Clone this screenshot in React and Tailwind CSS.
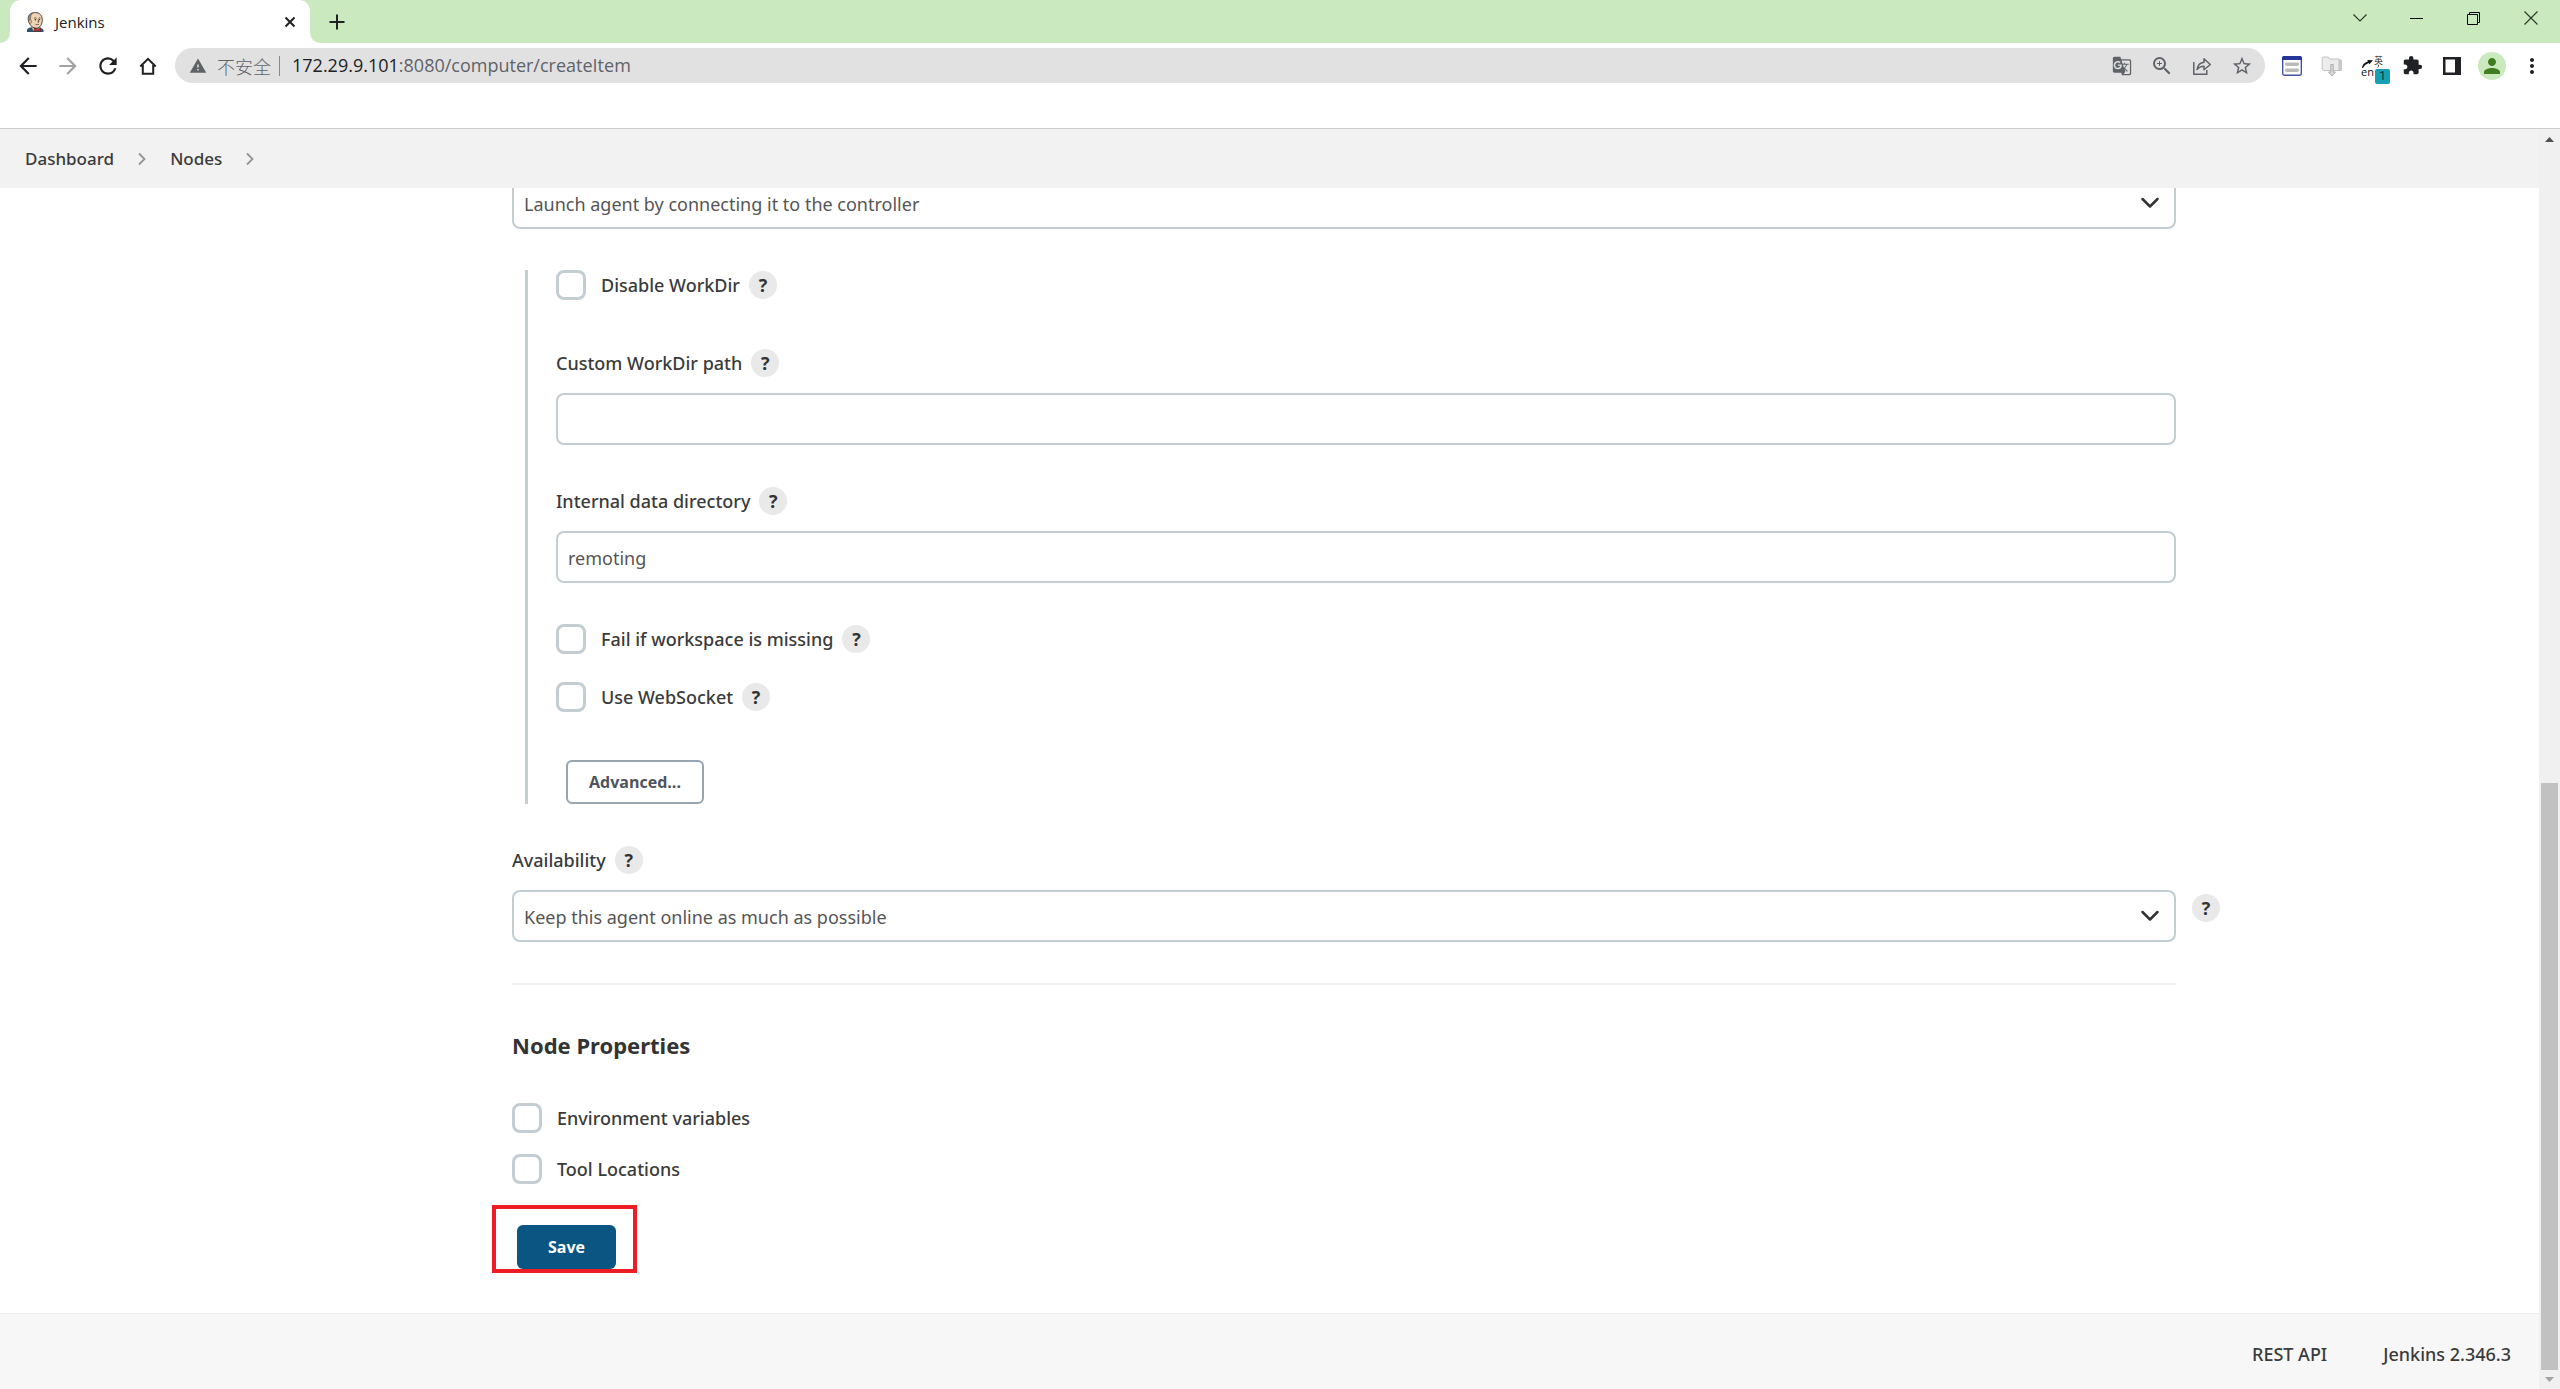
import { useState } from 'react';
import {
  MdArrowBack,
  MdArrowForward,
  MdRefresh,
  MdWarning,
  MdGTranslate,
  MdZoomIn,
  MdStarBorder,
  MdExtension,
  MdPerson,
  MdMoreVert,
} from 'react-icons/md';

function JenkinsIcon() {
  return (
    <svg width="18" height="20" viewBox="0 0 18 20" aria-hidden="true">
      <path d="M1 20v-2.600c1-1.300 3-2 5-2.100h6.500c2.300.3 4 1.400 5 2.700v2z" fill="#2f5268" />
      <path d="M6 14.500l3.500 3.500 4-3v3.500H7z" fill="#f1ece4" />
      <path d="M2.500 6.500C2.500 2.500 5.500.6 9.500.6s6.800 2.700 6.800 7.200c0 4.400-2.300 8.400-5.800 8.400-4.500 0-8-3.700-8-9.700z" fill="#efd4b3" stroke="#3a342f" strokeWidth=".9" />
      <path d="M2.200 8.500C1.500 4.500 3 1.800 6.500.9c-2 2-1.800 3.600-2 5.600.2 1.500-.4 3-.8 4.500z" fill="#8f8b86" stroke="#3a342f" strokeWidth=".5" />
      <ellipse cx="4.200" cy="9.500" rx="1.400" ry="2" fill="#e3bd98" stroke="#5a4a3d" strokeWidth=".5" />
      <path d="M8 6.300c.8-.6 1.800-.6 2.500 0M12.500 6.300c.7-.5 1.500-.5 2 0M12 7.500l1 2.500h-1.500M9.500 12.300c1.300.6 2.500.5 3.500-.2" fill="none" stroke="#3a342f" strokeWidth=".8" />
      <circle cx="9.400" cy="7.800" r=".8" fill="#2a2624" />
      <circle cx="13.400" cy="7.600" r=".7" fill="#2a2624" />
      <path d="M8 16l3 1.400 3.300-1.600v3.700L11 18.400 8 19.600z" fill="#d8352f" stroke="#5e1512" strokeWidth=".5" />
    </svg>
  );
}

function HomeIcon() {
  return (
    <svg width="20" height="20" viewBox="0 0 20 20" fill="none" stroke="#202124" strokeWidth="2" aria-hidden="true">
      <path d="M2.300 10.500L10 2.800l7.700 7.700M4.800 9v8.800h10.400V9" strokeLinejoin="miter" />
    </svg>
  );
}

function ShareIcon() {
  return (
    <svg width="20" height="20" viewBox="0 0 20 20" fill="none" stroke="#5f6368" strokeWidth="1.500" aria-hidden="true">
      <path d="M1.800 6v12.200h13V14" />
      <path d="M5 13.500c.6-4 3-6.700 7-7.200V2.800l6.300 5.700-6.300 5.300v-3.600c-3 0-5.200 1-7 3.300z" strokeLinejoin="round" />
    </svg>
  );
}

function NotesIcon() {
  return (
    <svg width="22" height="22" viewBox="0 0 22 22" aria-hidden="true">
      <rect x="1.700" y="1.700" width="18.600" height="18.600" rx="2" fill="#fff" stroke="#4450b0" strokeWidth="1.400" />
      <path d="M1 5V3a2 2 0 012-2h16a2 2 0 012 2v2z" fill="#28359a" />
      <rect x="4" y="7.500" width="14" height="3.500" rx="1.700" fill="#b9b9b9" />
      <rect x="4" y="13.500" width="14" height="3.500" rx="1.700" fill="#b9b9b9" />
    </svg>
  );
}

function FolderIcon() {
  return (
    <svg width="22" height="22" viewBox="0 0 22 22" aria-hidden="true">
      <path d="M3.500 5h16.800v10.500H3.500z" fill="#cfcfcf" stroke="#bdbdbd" />
      <path d="M1.200 3.200l1-1.200h5l1.300 2H18v11.500H2.500L1.200 14z" fill="#ececec" stroke="#c2c2c2" />
      <path d="M9.800 9.500h2.400v7.500h2.300L11 21l-3.500-4h2.300z" fill="#d9d9d9" stroke="#a9a9a9" strokeWidth=".9" />
    </svg>
  );
}

function PanelIcon() {
  return (
    <svg width="18" height="18" viewBox="0 0 18 18" aria-hidden="true">
      <path d="M0 0h18v18H0zM2.500 2.500v13H12v-13z" fill="#202124" fillRule="evenodd" />
    </svg>
  );
}

function Crumb() {
  return (
    <svg width="10" height="14" viewBox="0 0 10 14" fill="none" stroke="#949494" strokeWidth="1.800" aria-hidden="true">
      <path d="M2 1.500L7.500 7 2 12.500" />
    </svg>
  );
}

function ToolButton({ label, children }) {
  return (
    <button type="button" aria-label={label} className="flex h-7 w-7 shrink-0 items-center justify-center">
      {children}
    </button>
  );
}

function BrowserTabs() {
  return (
    <div className="flex h-[43px] items-stretch bg-[#cae9be] pl-[10px]">
      <div className="relative flex w-[300px] items-center rounded-t-[11px] bg-white pl-4 pr-[10px]">
        <JenkinsIcon />
        <span className="ml-[11px] flex-1 font-['Open_Sans',sans-serif] text-[15px] leading-5 text-[#202124]">Jenkins</span>
        <button type="button" aria-label="Close tab" className="flex h-5 w-5 items-center justify-center">
          <svg width="12" height="12" viewBox="0 0 12 12" stroke="#202124" strokeWidth="2" aria-hidden="true">
            <path d="M1.500 1.500l9 9M10.500 1.500l-9 9" />
          </svg>
        </button>
        {/* curved feet of the active tab */}
        <svg className="absolute bottom-0 right-full" width="10" height="10" viewBox="0 0 10 10" aria-hidden="true">
          <path d="M10 0v10H0A10 10 0 0010 0z" fill="#fff" />
        </svg>
        <svg className="absolute bottom-0 left-full" width="10" height="10" viewBox="0 0 10 10" aria-hidden="true">
          <path d="M0 0v10h10A10 10 0 010 0z" fill="#fff" />
        </svg>
      </div>
      <button type="button" aria-label="New tab" className="ml-[17px] flex w-5 items-center justify-center">
        <svg width="16" height="16" viewBox="0 0 16 16" stroke="#202124" strokeWidth="2" aria-hidden="true">
          <path d="M8 .5v15M.5 8h15" />
        </svg>
      </button>
      <div className="mr-px ml-auto flex h-9 text-black">
        <button type="button" aria-label="Search tabs" className="flex w-[57px] items-center justify-center">
          <svg width="14" height="8" viewBox="0 0 14 8" fill="none" stroke="#2d3a29" strokeWidth="1.200" aria-hidden="true">
            <path d="M.5.5L7 7l6.500-6.500" />
          </svg>
        </button>
        <button type="button" aria-label="Minimize" className="flex w-[57px] items-center justify-center">
          <span className="h-px w-[13px] bg-black" />
        </button>
        <button type="button" aria-label="Restore" className="flex w-[57px] items-center justify-center">
          <svg width="13" height="13" viewBox="0 0 13 13" fill="none" stroke="#000" aria-hidden="true">
            <path d="M.5 2.500h10v10H.5zM2.500 2.500v-2h10v10h-2" />
          </svg>
        </button>
        <button type="button" aria-label="Close" className="flex w-[57px] items-center justify-center">
          <svg width="14" height="14" viewBox="0 0 14 14" stroke="#2d3a29" strokeWidth="1.200" aria-hidden="true">
            <path d="M.5.5l13 13M13.500.5l-13 13" />
          </svg>
        </button>
      </div>
    </div>
  );
}

function BrowserToolbar() {
  return (
    <div className="flex h-[86px] items-start gap-[13px] border-b border-[#cccccc] bg-white px-[14px] pt-[5px]">
      <div className="flex h-[35px] items-center gap-3">
        <ToolButton label="Back"><MdArrowBack size={26} color="#202124" /></ToolButton>
        <ToolButton label="Forward"><MdArrowForward size={26} color="#a3a3a5" /></ToolButton>
        <ToolButton label="Reload"><MdRefresh size={26} color="#202124" /></ToolButton>
        <ToolButton label="Home"><HomeIcon /></ToolButton>
      </div>
      <div className="flex h-[35px] flex-1 items-center rounded-full bg-[#e1e1e1] pl-[14px] pr-[9px]">
        <MdWarning size={18} color="#5f6368" />
        <span className="ml-[10px] whitespace-nowrap font-['Noto_Sans_CJK_SC',sans-serif] text-lg leading-6 font-light text-[#5f6368]">不安全</span>
        <span className="ml-2 h-5 w-px bg-[#85878a]" />
        <div className="relative ml-3 h-[26px] flex-1 font-['Open_Sans',sans-serif] text-lg leading-6">
          <input aria-label="Address" readOnly defaultValue="172.29.9.101:8080/computer/createItem" className="block h-6 w-full text-transparent outline-none" />
          {/* host is drawn darker than the rest of the url */}
          <div aria-hidden="true" className="pointer-events-none absolute inset-0 text-[#5f6368]">
            <span className="text-[#202124]">172.29.9.101</span>:8080/computer/createItem
          </div>
        </div>
        <div className="flex items-center gap-3">
          <ToolButton label="Translate"><MdGTranslate size={20} color="#5f6368" /></ToolButton>
          <ToolButton label="Zoom"><MdZoomIn size={24} color="#5f6368" /></ToolButton>
          <ToolButton label="Share"><ShareIcon /></ToolButton>
          <ToolButton label="Bookmark"><MdStarBorder size={22} color="#5f6368" /></ToolButton>
        </div>
      </div>
      <div className="flex h-[35px] items-center gap-3">
        <ToolButton label="Notes"><NotesIcon /></ToolButton>
        <ToolButton label="Downloads"><FolderIcon /></ToolButton>
        <div className="relative">
          <ToolButton label="Translator">
            <svg width="28" height="28" viewBox="0 0 28 28" aria-hidden="true">
              <path d="M4 16c.3-3.300 2.500-5.600 5.800-6.500L9.500 8l5.500.3-3.600 4-.7-1.400C8 12 6 13.500 5 16z" fill="#111" />
              <path d="M20 12.500c.8 1 .8 2-.3 3" fill="none" stroke="#333" />
              <text x="16" y="12" fontSize="9" fontFamily="Noto Sans CJK SC" fill="#222">英</text>
              <text x="3" y="24" fontSize="11" fontFamily="Open Sans" fill="#111">en</text>
            </svg>
          </ToolButton>
          <span className="absolute -right-1 -bottom-1 flex h-[15px] w-[15px] items-center justify-center rounded-xs bg-[#17a0b4] font-['Roboto',sans-serif] text-xs leading-none text-[#16333a]">1</span>
        </div>
        <ToolButton label="Extensions"><MdExtension size={21} color="#202124" /></ToolButton>
        <ToolButton label="Side panel"><PanelIcon /></ToolButton>
        <button type="button" aria-label="Profile" className="flex h-7 w-7 items-center justify-center rounded-full bg-[#cae9be]">
          <MdPerson size={24} color="#3f7d20" />
        </button>
        <ToolButton label="Menu"><MdMoreVert size={24} color="#202124" /></ToolButton>
      </div>
    </div>
  );
}

function Help({ about }) {
  return (
    <button
      type="button"
      aria-label={`Help for feature: ${about}`}
      className="flex h-7 w-7 items-center justify-center rounded-full bg-[#e9e9e9] font-['Open_Sans',sans-serif] text-lg leading-6 font-bold text-[#333333]"
    >
      ?
    </button>
  );
}

function Check({ id, label, help }) {
  const [on, setOn] = useState(false);
  return (
    <div className="flex h-[30px] items-center">
      <input
        id={id}
        type="checkbox"
        checked={on}
        onChange={(e) => setOn(e.target.checked)}
        className="h-[30px] w-[30px] appearance-none rounded-lg border-3 border-[#c3cdd2] bg-white checked:bg-[#0b5583]"
      />
      <label htmlFor={id} className="ml-[15px] text-lg leading-6 font-medium">{label}</label>
      {help && <div className="ml-[9px] flex"><Help about={label} /></div>}
    </div>
  );
}

function FieldLabel({ htmlFor, children }) {
  return (
    <div className="mb-4 flex h-7 items-center gap-[9px]">
      <label htmlFor={htmlFor} className="text-lg leading-6 font-medium">{children}</label>
      <Help about={children} />
    </div>
  );
}

function TextField({ id, value }) {
  return (
    <input
      id={id}
      type="text"
      defaultValue={value}
      className="block h-[52px] w-full rounded-lg border-2 border-[#c3cdd2] bg-white px-[10px] pt-px text-lg text-[#555555] outline-none"
    />
  );
}

function SelectField({ id, label, options }) {
  return (
    <div className="relative">
      <select
        id={id}
        aria-label={label}
        className="block h-[52px] w-full appearance-none rounded-lg border-2 border-[#c3cdd2] bg-white px-[10px] pt-px text-lg text-[#555555] outline-none"
      >
        {options.map((o) => <option key={o}>{o}</option>)}
      </select>
      <svg className="pointer-events-none absolute top-5 right-4" width="20" height="12" viewBox="0 0 20 12" fill="none" stroke="#333" strokeWidth="2.500" strokeLinecap="round" strokeLinejoin="round" aria-hidden="true">
        <path d="M2.500 2L10 9.500 17.500 2" />
      </svg>
    </div>
  );
}

function Scrollbar() {
  return (
    <div className="flex w-[21px] shrink-0 flex-col bg-[#f0f0f0] px-[2px]">
      <div className="flex h-[21px] items-center justify-center">
        <svg width="9" height="5" viewBox="0 0 9 5" aria-hidden="true"><path d="M0 5L4.500 0 9 5z" fill="#505050" /></svg>
      </div>
      <div className="grow-[633]" />
      <div className="grow-[587] bg-[#c1c1c1]" />
      <div className="flex h-[19px] items-center justify-center">
        <svg width="9" height="5" viewBox="0 0 9 5" aria-hidden="true"><path d="M0 0l4.500 5L9 0z" fill="#a3a3a3" /></svg>
      </div>
    </div>
  );
}

export default function App() {
  return (
    <div className="flex min-h-screen flex-col bg-white font-['Noto_Sans',sans-serif] text-lg text-[#3b3b3b]">
      <BrowserTabs />
      <BrowserToolbar />
      <div className="flex flex-1">
        <div className="flex min-w-0 flex-1 flex-col">
          <nav aria-label="Breadcrumb" className="z-10 flex h-[59px] items-center gap-[23px] bg-[#f2f2f2] pl-[25px] text-[17px] leading-6 font-medium">
            <a href="#dashboard">Dashboard</a>
            <Crumb />
            <a href="#nodes">Nodes</a>
            <Crumb />
          </nav>

          <main className="flex-1 pr-[363px] pb-11 pl-[512px]">
            {/* scrolled partly under the breadcrumb bar */}
            <div className="-mt-[11px]">
              <SelectField id="launch" label="Launch method" options={['Launch agent by connecting it to the controller']} />
            </div>

            <section className="mt-[41px] ml-[13px] border-l-3 border-[#c3cdd2] pl-7">
              <Check id="disable-workdir" label="Disable WorkDir" help />
              <div className="mt-[49px]">
                <FieldLabel htmlFor="workdir">Custom WorkDir path</FieldLabel>
                <TextField id="workdir" value="" />
              </div>
              <div className="mt-[42px]">
                <FieldLabel htmlFor="internal-dir">Internal data directory</FieldLabel>
                <TextField id="internal-dir" value="remoting" />
              </div>
              <div className="mt-[41px] flex flex-col gap-7">
                <Check id="fail-missing" label="Fail if workspace is missing" help />
                <Check id="websocket" label="Use WebSocket" help />
              </div>
              <button type="button" className="mt-12 ml-[10px] block h-11 w-[138px] rounded-md border-2 border-[#98a4ae] font-['Open_Sans',sans-serif] text-base font-bold text-[#4d545d]">
                Advanced...
              </button>
            </section>

            <div className="mt-[42px]">
              <FieldLabel htmlFor="availability">Availability</FieldLabel>
              <div className="relative">
                <SelectField id="availability" label="Availability" options={['Keep this agent online as much as possible']} />
                <div className="absolute top-1 left-full ml-4">
                  <Help about="Keep this agent online as much as possible" />
                </div>
              </div>
            </div>

            <hr className="mt-[41px] border-t-2 border-[#f2f2f2]" />
            <h2 className="mt-[45px] text-[22px] leading-[30px] font-bold text-[#333333]">Node Properties</h2>
            <div className="mt-[43px] flex flex-col gap-[21px]">
              <Check id="env-vars" label="Environment variables" />
              <Check id="tool-locations" label="Tool Locations" />
            </div>

            <div className="relative mt-[41px] ml-[5px] w-[99px]">
              <button type="submit" className="block h-11 w-full rounded-md bg-[#0b5583] font-['Open_Sans',sans-serif] text-base font-bold text-white">Save</button>
              <div className="pointer-events-none absolute -top-5 -right-[21px] -bottom-1 -left-[25px] border-4 border-[#ee1c25]" />
            </div>
          </main>

          <footer className="flex h-[76px] items-center justify-end gap-14 border-t border-[#eeeeee] bg-[#f7f7f7] pr-7 pt-1 text-lg leading-6 font-medium">
            <a href="#api">REST API</a>
            <a href="#about">Jenkins 2.346.3</a>
          </footer>
        </div>
        <Scrollbar />
      </div>
    </div>
  );
}
